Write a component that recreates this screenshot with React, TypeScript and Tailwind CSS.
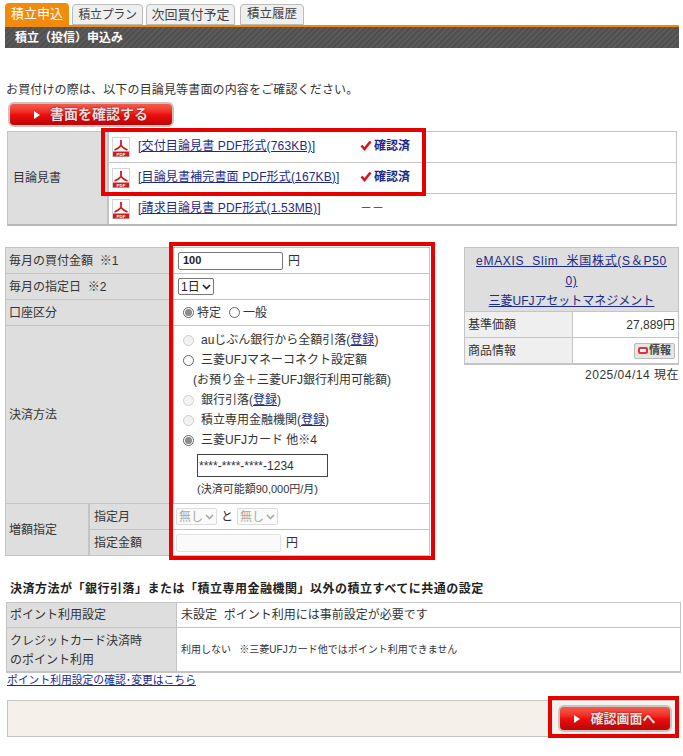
import React from 'react';

const font = { fontFamily: '"Liberation Sans", "Noto Sans CJK JP", sans-serif' };

function PdfIcon() {
  return (
    <svg width="18" height="20" viewBox="0 0 18 20" className="shrink-0">
      <rect x="0.5" y="0.5" width="17" height="19" fill="#fff" stroke="#d4d4d4" />
      <path d="M9 3 L9 8.5 M9 8.5 C7.5 10.5 5 12 2.5 13 M9 8.5 C10.5 10.5 13 12 15.5 13" stroke="#c9201d" strokeWidth="1.8" fill="none" />
      <rect x="1" y="14.5" width="16" height="5" fill="#c9201d" />
      <text x="9" y="18.6" textAnchor="middle" fontSize="4.4" fontWeight="700" fill="#fff">PDF</text>
    </svg>
  );
}

function Tab({ label, active, w }: { label: string; active?: boolean; w: string }) {
  return (
    <div
      className={`${w} h-[21px] flex items-center justify-center rounded-t-[4px] ${
        active ? 'bg-[#f28a0c] text-white h-[22px]' : 'bg-[#efefef] border border-[#bbbbbb] text-[#444] mt-[1px]'
      }`}
    >
      {label}
    </div>
  );
}

function RedButton({ label, w, h, text }: { label: string; w: string; h: string; text: string }) {
  return (
    <div className={`${w} ${h} rounded-[6px] border-2 border-[#c9c2c2] bg-gradient-to-b from-[#f65a4c] via-[#ee0f0f] to-[#bb0505] flex items-center justify-center gap-[10px]`}>
      <svg width="6" height="8" viewBox="0 0 6 8"><path d="M0 0 L6 4 L0 8 Z" fill="#fff" /></svg>
      <span className={`${text} font-bold text-[#eadddd] [text-shadow:0_0_2px_#7a1010]`}>{label}</span>
    </div>
  );
}

function DocRow({ title, status, h, last }: { title: string; status?: boolean; h: string; last?: boolean }) {
  return (
    <div className={`${h} flex items-center pl-[3px] ${last ? '' : 'border-b border-[#c4c4c4]'}`}>
      <PdfIcon />
      <a className="ml-[8px] mb-[3px] w-[222px] text-[#1c2a8a] underline whitespace-nowrap tracking-[0.15px]">{title}</a>
      {status ? (
        <span className="flex items-center mb-[3px] gap-[2px] font-bold text-[#1c2a8a]">
          <svg width="12" height="11" viewBox="0 0 12 11"><path d="M1.5 5.5 L4.5 9 L10.5 1.5" stroke="#d5141c" strokeWidth="2.6" fill="none" /></svg>
          確認済
        </span>
      ) : (
        <span className="mb-[3px]">－－</span>
      )}
    </div>
  );
}

function Radio({ checked, disabled }: { checked?: boolean; disabled?: boolean }) {
  return (
    <span className={`inline-flex w-[11px] h-[11px] shrink-0 rounded-full border items-center justify-center ${disabled ? 'border-[#cfcfcf] bg-[#f2f2f2]' : 'border-[#666] bg-white'}`}>
      {checked && <span className="w-[7px] h-[7px] rounded-full bg-[#8a8a8a]" />}
    </span>
  );
}

function Reg() {
  return <>(<a className="text-[#1c2a8a] underline">登録</a>)</>;
}

function SmallSelect({ label, disabled }: { label: string; disabled?: boolean }) {
  return (
    <span className={`inline-flex items-center h-[17px] px-[2px] gap-[2px] rounded-[2px] border ${disabled ? 'border-[#dcdcdc] text-[#a8a8a8] bg-[#fafafa]' : 'border-[#777] text-[#222] bg-white'}`}>
      {label}
      <svg width="9" height="6" viewBox="0 0 9 6"><path d="M1 1 L4.5 4.5 L8 1" stroke={disabled ? '#a8a8a8' : '#222'} strokeWidth="1.6" fill="none" /></svg>
    </span>
  );
}

export default function App() {
  return (
    <div style={font} className="relative w-[683px] h-[756px] overflow-hidden bg-white text-[12px] text-[#333]">
      {/* tabs */}
      <div className="flex pl-[5px] pt-[3px] items-end text-[13px]">
        <Tab label="積立申込" active w="w-[64px]" />
        <Tab label="積立プラン" w="w-[71px] ml-[3px] text-[12px] tracking-[-0.4px]" />
        <Tab label="次回買付予定" w="w-[89px] ml-[3px]" />
        <Tab label="積立履歴" w="w-[64px] ml-[5px] text-[12.5px]" />
      </div>
      <div className="ml-[5px] w-[674px] h-[2px] bg-[#f28a0c]" />
      <div className="ml-[5px] w-[674px] h-[21px] bg-[repeating-linear-gradient(135deg,#5a5a5a_0,#5a5a5a_2px,#505050_2px,#505050_4px)] flex items-center pl-[10px] font-bold text-white">
        積立（投信）申込み
      </div>

      <p className="mt-[34px] ml-[6px] leading-[16px] tracking-[0.15px]">お買付けの際は、以下の目論見等書面の内容をご確認ください。</p>
      <div className="ml-[8px] mt-[4px]">
        <RedButton label="書面を確認する" w="w-[166px]" h="h-[25px]" text="text-[14px]" />
      </div>

      {/* documents */}
      <div className="ml-[7px] mt-[4px] w-[670px] h-[95px] flex border border-[#c4c4c4] border-b-2 border-b-[#b8b8b8]">
        <div className="w-[101px] bg-[#dedede] border-r-2 border-[#c4c4c4] flex items-center pl-[5px]">目論見書</div>
        <div className="flex-1">
          <DocRow title="[交付目論見書 PDF形式(763KB)]" status h="h-[31px]" />
          <DocRow title="[目論見書補完書面 PDF形式(167KB)]" status h="h-[31px]" />
          <DocRow title="[請求目論見書 PDF形式(1.53MB)]" h="h-[30px]" last />
        </div>
      </div>

      <div className="flex mt-[21px] items-start">
        {/* order form */}
        <div className="ml-[5px] w-[425px] border border-[#c4c4c4]">
          <div className="flex h-[26px] border-b border-[#c4c4c4]">
            <div className="w-[166px] bg-[#dedede] flex items-center pl-[3px]">毎月の買付金額&nbsp;&nbsp;※1</div>
            <div className="flex-1 border-l-2 border-[#c4c4c4] flex items-center pl-[4px] gap-[5px]">
              <span className="w-[105px] h-[18px] border border-[#777] rounded-[2px] pl-[4px] flex items-center font-bold text-[11px] text-[#222]">100</span>円
            </div>
          </div>
          <div className="flex h-[26px] border-b border-[#c4c4c4]">
            <div className="w-[166px] bg-[#dedede] flex items-center pl-[3px]">毎月の指定日&nbsp;&nbsp;※2</div>
            <div className="flex-1 border-l-2 border-[#c4c4c4] flex items-center pl-[4px]"><SmallSelect label="1日" /></div>
          </div>
          <div className="flex h-[26px] border-b border-[#c4c4c4]">
            <div className="w-[166px] bg-[#dedede] flex items-center pl-[3px]">口座区分</div>
            <div className="flex-1 border-l-2 border-[#c4c4c4] flex items-center pl-[9px] gap-[3px]">
              <Radio checked />特定<span className="w-[2px]" /><Radio />一般
            </div>
          </div>
          <div className="flex h-[178px] border-b border-[#c4c4c4]">
            <div className="w-[166px] bg-[#dedede] flex items-center pl-[3px]">決済方法</div>
            <div className="flex-1 border-l-2 border-[#c4c4c4] pl-[9px] pt-[4px] leading-[20px]">
              <div className="flex items-center gap-[7px] h-[20px]"><Radio disabled /><span>auじぶん銀行から全額引落<Reg /></span></div>
              <div className="flex items-center gap-[7px] h-[20px]"><Radio />三菱UFJマネーコネクト設定額</div>
              <div className="h-[20px] pl-[10px]">(お預り金＋三菱UFJ銀行利用可能額)</div>
              <div className="flex items-center gap-[7px] h-[20px]"><Radio disabled /><span>銀行引落<Reg /></span></div>
              <div className="flex items-center gap-[7px] h-[20px]"><Radio disabled /><span>積立専用金融機関<Reg /></span></div>
              <div className="flex items-center gap-[7px] h-[20px]"><Radio checked />三菱UFJカード 他※4</div>
              <div className="ml-[14px] mt-[4px] w-[131px] h-[23px] border border-[#444] flex items-center pl-[1px]">****-****-****-1234</div>
              <div className="ml-[14px] mt-[4px] text-[11px] leading-[16px]">(決済可能額90,000円/月)</div>
            </div>
          </div>
          <div className="flex h-[51px]">
            <div className="w-[84px] bg-[#dedede] border-r-2 border-[#c4c4c4] flex items-center pl-[3px]">増額指定</div>
            <div className="flex-1">
              <div className="flex h-[26px] border-b border-[#c4c4c4]">
                <div className="w-[80px] bg-[#dedede] flex items-center pl-[4px]">指定月</div>
                <div className="flex-1 border-l-2 border-[#c4c4c4] flex items-center pl-[4px] gap-[4px]">
                  <SmallSelect label="無し" disabled />と<SmallSelect label="無し" disabled />
                </div>
              </div>
              <div className="flex h-[25px]">
                <div className="w-[80px] bg-[#dedede] flex items-center pl-[4px]">指定金額</div>
                <div className="flex-1 border-l-2 border-[#c4c4c4] flex items-center pl-[4px] gap-[5px]">
                  <span className="w-[105px] h-[18px] border border-[#e2e2e2] bg-[#fafafa] rounded-[2px]" />円
                </div>
              </div>
            </div>
          </div>
        </div>

        {/* fund summary */}
        <div className="ml-[34px] w-[215px]">
          <div className="border border-[#c4c4c4] border-b-2">
            <div className="h-[64px] bg-[#dedede] border-b border-[#c4c4c4] text-center leading-[20px] pt-[3px] px-[8px] text-[#1c2a8a] underline">
              <div className="break-all tracking-[0.7px]">eMAXIS&nbsp;&nbsp;Slim&nbsp;&nbsp;米国株式(S＆P500)</div>
              <div>三菱UFJアセットマネジメント</div>
            </div>
            <div className="flex h-[26px] border-b border-[#c4c4c4]">
              <div className="w-[108px] bg-[#efefef] border-r border-[#c4c4c4] flex items-center pl-[3px]">基準価額</div>
              <div className="flex-1 flex items-center justify-end pr-[3px]">27,889円</div>
            </div>
            <div className="flex h-[25px]">
              <div className="w-[108px] bg-[#efefef] border-r border-[#c4c4c4] flex items-center pl-[3px]">商品情報</div>
              <div className="flex-1 flex items-center justify-end pr-[3px]">
                <span className="w-[41px] h-[16px] rounded-[2px] bg-[#e6e6e6] border border-[#bbb] flex items-center justify-center gap-[1px] text-[11px] font-bold text-[#444]">
                  <span className="w-[10px] h-[7px] border-2 border-[#e8303a] rounded-[2px] bg-white" />情報
                </span>
              </div>
            </div>
          </div>
          <p className="text-right mt-[2px] leading-[16px] tracking-[0.5px]">2025/04/14 現在</p>
        </div>
      </div>

      {/* common settings */}
      <h2 className="ml-[10px] mt-[25px] font-bold text-[#222] leading-[16px] tracking-[0.5px]">決済方法が「銀行引落」または「積立専用金融機関」以外の積立すべてに共通の設定</h2>
      <div className="ml-[6px] mt-[5px] w-[675px] border border-[#c4c4c4] border-b-2">
        <div className="flex h-[25px] border-b border-[#c4c4c4]">
          <div className="w-[169px] bg-[#dedede] flex items-center pl-[3px]">ポイント利用設定</div>
          <div className="flex-1 border-l border-[#c4c4c4] flex items-center pl-[4px]">未設定&nbsp;&nbsp;ポイント利用には事前設定が必要です</div>
        </div>
        <div className="flex h-[43px]">
          <div className="w-[169px] bg-[#dedede] flex flex-col justify-center pl-[3px] pt-[3px] leading-[19px]">
            <span>クレジットカード決済時</span>
            <span>のポイント利用</span>
          </div>
          <div className="flex-1 border-l border-[#c4c4c4] flex items-center pl-[4px] text-[10px]">利用しない&nbsp;&nbsp;&nbsp;※三菱UFJカード他ではポイント利用できません</div>
        </div>
      </div>
      <a className="block ml-[7px] leading-[14px] text-[10.8px] text-[#1c2a8a] underline">ポイント利用設定の確認･変更はこちら</a>

      <div className="ml-[7px] mt-[13px] w-[672px] h-[37px] bg-[#f5f1ea] border border-[#c4c4c4] flex items-center justify-end pr-[6px]">
        <RedButton label="確認画面へ" w="w-[114px]" h="h-[27px]" text="text-[13px]" />
      </div>

      {/* annotations */}
      <div className="absolute left-[101px] top-[128px] w-[325px] h-[68px] border-[4px] border-[#e60000]" />
      <div className="absolute left-[169px] top-[242px] w-[266px] h-[318px] border-[4px] border-[#e60000]" />
      <div className="absolute left-[548px] top-[696px] w-[131px] h-[42px] border-[4px] border-[#e60000]" />
    </div>
  );
}
